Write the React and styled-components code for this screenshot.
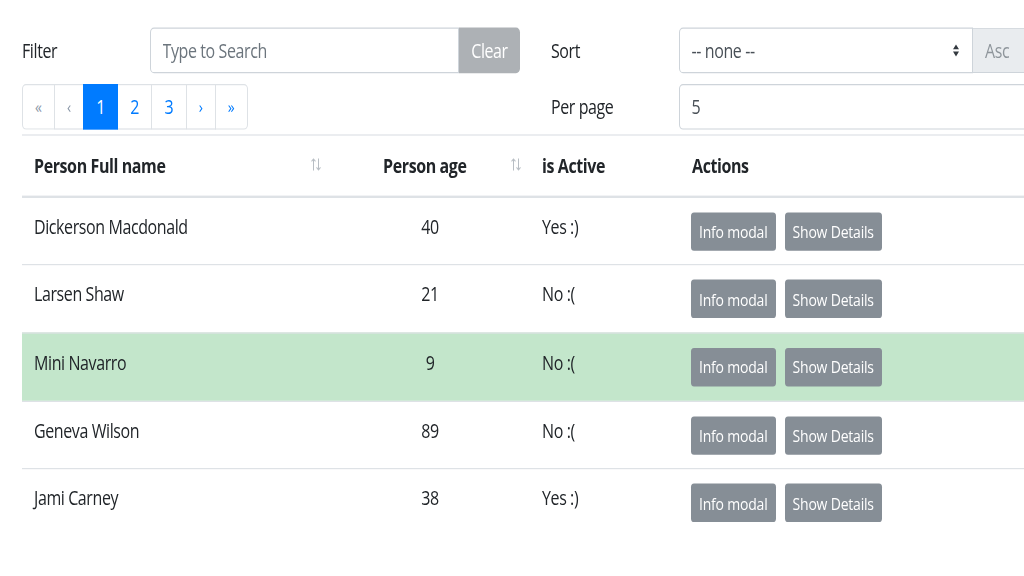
import React from "react";
import styled, { createGlobalStyle } from "styled-components";

const Global = createGlobalStyle`
  html { overflow: hidden; }
  html, body { margin: 0; padding: 0; background: #fff; }
  body {
    min-height: 100vh;
    font-family: "Open Sans", "Noto Sans", sans-serif;
    color: #212529;
    font-size: 16px;
    line-height: 1.5;
    letter-spacing: -0.4px;
  }
  * { box-sizing: border-box; }
`;

const Page = styled.div`
  width: 1049px;
  padding: 23.33px 0 0 22px;
  transform: scaleY(1.2);
  transform-origin: 0 0;
`;

const Controls = styled.div`
  display: grid;
  grid-template-columns: 498px 498px;
  grid-auto-rows: 38px;
  column-gap: 31px;
  row-gap: 8.67px;
`;

const Field = styled.div`
  display: flex;
  align-items: center;
  height: 38px;
`;

const Label = styled.label`
  flex: none;
  width: 127.5px;
`;

const InputGroup = styled.div`
  display: flex;
  flex: 1;
  height: 38px;
  min-width: 0;
`;

const TextInput = styled.input`
  flex: 1;
  min-width: 0;
  height: 38px;
  border: 1px solid #ced4da;
  border-radius: ${(p) => (p.$joined ? "4px 0 0 4px" : "4px")};
  padding: 6px 12px;
  font: inherit;
  letter-spacing: inherit;
  color: #495057;
  background: #fff;
  outline: none;
  &::placeholder { color: #6c757d; }
`;

const ClearButton = styled.button`
  flex: none;
  width: 61px;
  height: 38px;
  border: none;
  border-radius: 0 4px 4px 0;
  background: #adb1b5;
  color: #fff;
  font: inherit;
  letter-spacing: inherit;
  padding: 0 12px;
`;

const SelectBox = styled.div`
  flex: 1;
  min-width: 0;
  height: 38px;
  display: flex;
  align-items: center;
  justify-content: space-between;
  padding: 0 12px;
  border: 1px solid #ced4da;
  border-radius: 4px 0 0 4px;
  color: #495057;
  background: #fff;
`;

const DisabledSelect = styled.div`
  flex: none;
  width: 76px;
  height: 38px;
  display: flex;
  align-items: center;
  padding: 0 12px;
  border: 1px solid #ced4da;
  border-left: none;
  border-radius: 0 4px 4px 0;
  background: #e9ecef;
  color: #8e959b;
`;

const Pagination = styled.ul`
  display: flex;
  list-style: none;
  margin: 0;
  padding: 0;
  height: 38px;
`;

const PageItem = styled.li`
  display: flex;
  align-items: center;
  justify-content: center;
  height: 38px;
  padding: 0 12px;
  margin-left: -1px;
  border: 1px solid ${(p) => (p.$active ? "#007bff" : "#dee2e6")};
  background: ${(p) => (p.$active ? "#007bff" : "#fff")};
  color: ${(p) => (p.$active ? "#fff" : p.$disabled ? "#8a97a8" : "#007bff")};
  font-size: ${(p) => (p.$small ? "14px" : "16px")};
  letter-spacing: 0;
  position: relative;
  z-index: ${(p) => (p.$active ? 1 : 0)};
  &:first-child { margin-left: 0; border-radius: 4px 0 0 4px; }
  &:last-child { border-radius: 0 4px 4px 0; }
`;

const Table = styled.table`
  width: 1027px;
  margin-top: 4.5px;
  border-collapse: collapse;
  table-layout: fixed;
`;

const Th = styled.th`
  position: relative;
  width: ${(p) => p.$w}px;
  padding: 12.4px 12px 12.8px;
  padding-right: ${(p) => (p.$sortable ? "22.4px" : "12px")};
  text-align: ${(p) => p.$align || "left"};
  vertical-align: bottom;
  font-weight: 700;
  border-top: 1px solid #dee2e6;
  border-bottom: 2px solid #dee2e6;
`;

const SortIcon = styled.svg`
  position: absolute;
  right: 8px;
  top: 50%;
  margin-top: -7px;
`;

const Row = styled.tr`
  background: ${(p) => (p.$variant === "success" ? "#c3e6cb" : "transparent")};
`;

const Td = styled.td`
  padding: 12px 12px 11.67px;
  text-align: ${(p) => p.$align || "left"};
  vertical-align: top;
  border-top: 1px solid #dee2e6;
`;

const Actions = styled.div`
  display: flex;
  gap: 9px;
  margin-left: -1px;
`;

const Button = styled.button`
  display: block;
  height: 32px;
  padding: 0 8px;
  border: none;
  border-radius: 3px;
  background: #868e96;
  color: #fff;
  font-family: inherit;
  font-size: 14px;
  letter-spacing: -0.2px;
`;

const SortArrows = () => (
  <SortIcon width="12" height="12" viewBox="0 0 12 12">
    <g stroke="#b8bec4" strokeWidth="1" fill="none">
      <path d="M3.5 1.5 V11 M1.5 3.5 L3.5 1.5 L5.5 3.5" />
      <path d="M8.5 1 V10.5 M6.5 8.5 L8.5 10.5 L10.5 8.5" />
    </g>
  </SortIcon>
);

const Caret = () => (
  <svg width="8" height="12" viewBox="0 0 8 12">
    <path d="M4 1 L7 5 H1 Z M4 11 L1 7 H7 Z" fill="#343a40" />
  </svg>
);

const people = [
  { name: "Dickerson Macdonald", age: 40, active: true },
  { name: "Larsen Shaw", age: 21, active: false },
  { name: "Mini Navarro", age: 9, active: false, variant: "success" },
  { name: "Geneva Wilson", age: 89, active: false },
  { name: "Jami Carney", age: 38, active: true },
];

export default function App() {
  return (
    <>
      <Global />
      <Page>
        <Controls>
          <Field>
            <Label>Filter</Label>
            <InputGroup>
              <TextInput $joined placeholder="Type to Search" />
              <ClearButton>Clear</ClearButton>
            </InputGroup>
          </Field>
          <Field>
            <Label>Sort</Label>
            <InputGroup>
              <SelectBox>
                <span>-- none --</span>
                <Caret />
              </SelectBox>
              <DisabledSelect>Asc</DisabledSelect>
            </InputGroup>
          </Field>
          <Field>
            <Pagination>
              <PageItem $disabled $small>«</PageItem>
              <PageItem $disabled $small>‹</PageItem>
              <PageItem $active>1</PageItem>
              <PageItem>2</PageItem>
              <PageItem>3</PageItem>
              <PageItem $small>›</PageItem>
              <PageItem $small>»</PageItem>
            </Pagination>
          </Field>
          <Field>
            <Label>Per page</Label>
            <InputGroup>
              <TextInput defaultValue="5" />
            </InputGroup>
          </Field>
        </Controls>
        <Table>
          <thead>
            <tr>
              <Th $w={308} $sortable>
                Person Full name
                <SortArrows />
              </Th>
              <Th $w={200} $sortable $align="center">
                Person age
                <SortArrows />
              </Th>
              <Th $w={150}>is Active</Th>
              <Th $w={369}>Actions</Th>
            </tr>
          </thead>
          <tbody>
            {people.map((p) => (
              <Row key={p.name} $variant={p.variant}>
                <Td>{p.name}</Td>
                <Td $align="center">{p.age}</Td>
                <Td>{p.active ? "Yes :)" : "No :("}</Td>
                <Td>
                  <Actions>
                    <Button>Info modal</Button>
                    <Button>Show Details</Button>
                  </Actions>
                </Td>
              </Row>
            ))}
          </tbody>
        </Table>
      </Page>
    </>
  );
}
